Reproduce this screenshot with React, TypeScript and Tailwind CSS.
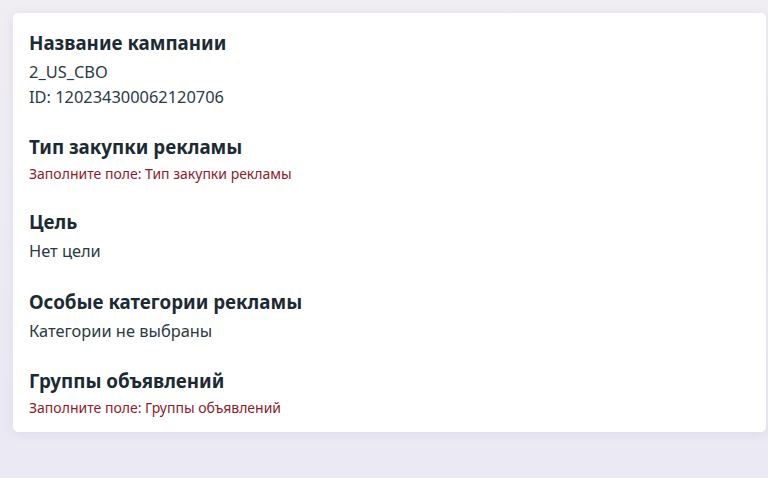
const sections: { title: string; lines: string[]; error?: boolean }[] = [
  { title: "Название кампании", lines: ["2_US_CBO", "ID: 120234300062120706"] },
  { title: "Тип закупки рекламы", lines: ["Заполните поле: Тип закупки рекламы"], error: true },
  { title: "Цель", lines: ["Нет цели"] },
  { title: "Особые категории рекламы", lines: ["Категории не выбраны"] },
  { title: "Группы объявлений", lines: ["Заполните поле: Группы объявлений"], error: true },
];

export default function App() {
  return (
    <div
      className="min-h-[478px] w-full bg-gradient-to-b from-[#f0eef3] to-[#eae9f4] pt-[13px] pl-[13px]"
      style={{ fontFamily: "'Noto Sans', sans-serif" }}
    >
      <div className="flex w-[753px] flex-col gap-[24px] rounded-[5px] bg-white px-4 pt-4 pb-[14px] shadow-[0_2px_12px_rgba(120,110,170,0.12)]">
        {sections.map((s) => (
          <div key={s.title} className="flex flex-col gap-1">
            <h2 className="text-[18.75px] font-bold leading-[27px] text-[#1c2b33]">{s.title}</h2>
            <div className="flex flex-col">
              {s.lines.map((l) =>
                s.error ? (
                  <span key={l} className="text-[14px] leading-[20px] text-[#8e1b2b]">
                    {l}
                  </span>
                ) : (
                  <span key={l} className="text-[16.4px] leading-[24.5px] text-[#2b3a44]">
                    {l}
                  </span>
                )
              )}
            </div>
          </div>
        ))}
      </div>
    </div>
  );
}
